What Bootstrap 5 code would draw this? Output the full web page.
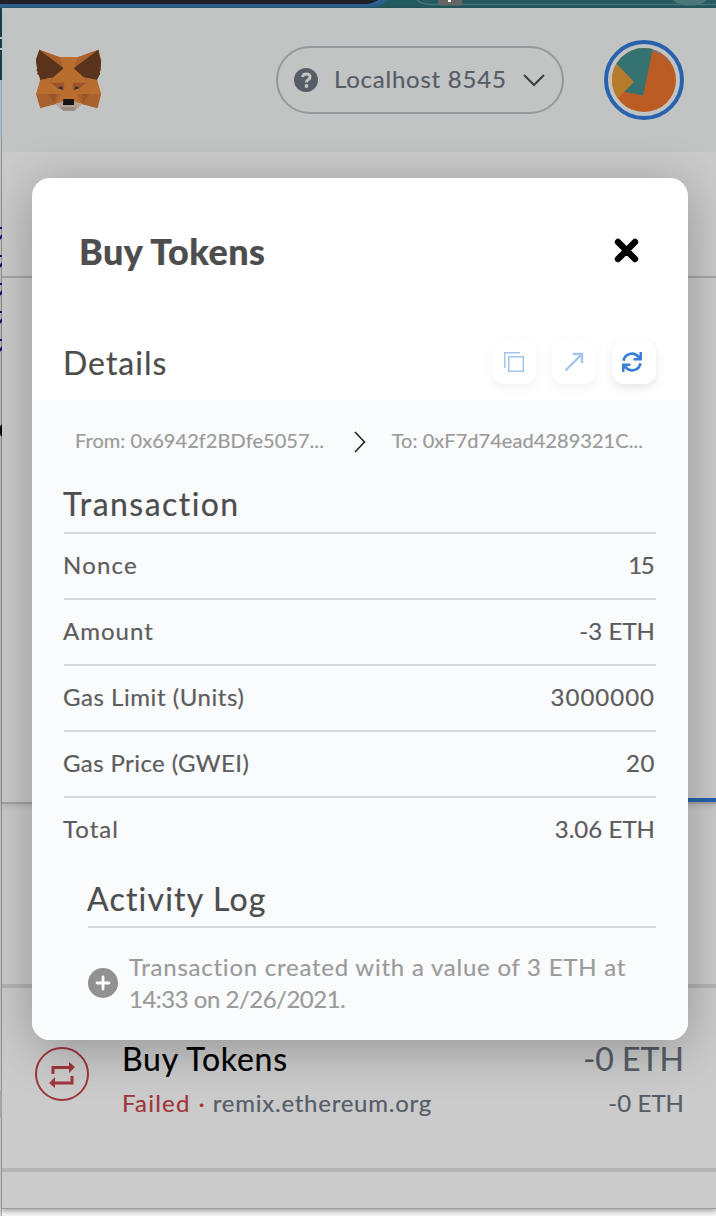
<!DOCTYPE html>
<html lang="en">
<head>
<meta charset="utf-8">
<meta name="viewport" content="width=device-width, initial-scale=1">
<title>Buy Tokens</title>
<link href="https://cdn.jsdelivr.net/npm/bootstrap@5.3.0/dist/css/bootstrap.min.css" rel="stylesheet">
<style>
body{font-family:Lato,"Liberation Sans",sans-serif;background:#f4f4f4;color:#4d4d4d;width:716px;height:1216px;overflow:hidden;-webkit-text-stroke:.2px currentColor}
svg{display:block;flex:none}
.t20{font-size:20px;line-height:28px}
.t24{font-size:24px;line-height:32px}
.t32{font-size:32px;line-height:40px}
.t36{font-size:36px;line-height:44px;font-weight:900}
.nw{white-space:nowrap}
.ls-tight{letter-spacing:-1.6px;padding-right:2px}
.ls-neg{letter-spacing:-.5px}
.ls-0{letter-spacing:.05px}
.ls-1{letter-spacing:.4px}
.ls-2{letter-spacing:.55px}
.ls-3{letter-spacing:.76px}
.ls-4{letter-spacing:1px}
.ls-5{letter-spacing:1.2px}
.ls-6{letter-spacing:1.45px}
.tabstrip{height:8px}
.wallet{height:1201px;background:#cbcbcb;border-bottom:1px solid #9c9c9c;box-shadow:0 2px 5px rgba(0,0,0,.35)}
.topbar{height:144px;background:#c2c3c3;padding:0 32px 0 34px}
.network{width:288px;height:68px;border:2px solid #95989c;border-radius:34px;color:#565d66;padding:0 17px 0 16px;margin-right:40px}
.network-name{margin-left:16px;padding-bottom:2px}
.avatar{width:80px;height:80px;border:4px solid #2962ae}
.crumbs{height:126px;border-bottom:2px solid #a9a9a9}
.overview{height:526px;border-bottom:2px solid #a3a3a3;box-shadow:0 2px 5px rgba(0,0,0,.12)}
.tabline{width:357px;height:4px;background:#2962ae}
.gap-block{height:180px}
.entry{height:188px;border:4px solid #b4b4b4;border-width:4px 0;padding:51px 32px 0 33px}
.entry-icon{margin-top:8px}
.entry-text{margin-left:33px}
.entry-sub{margin-top:8px}
.dot{margin:0 8px}
.slate{color:#565d66}
.fail{color:#a1353d}
.dialog{left:32px;top:178px;width:656px;height:862px;border-radius:18px;background:#fff;box-shadow:0 8px 50px rgba(0,0,0,.28)}
.dhead{height:146px;padding:0 46px 0 47px}
.dsub{height:76px;padding:0 32px 0 31px}
.dsub>span{padding-top:1px}
.tool{width:44px;height:44px;border-radius:12px;background:#fff;box-shadow:0 4px 10px rgba(0,0,0,.1)}
.dim{opacity:.45}
.dbody{height:640px;background:#fafbfd;padding:0 32px}
.party{height:82px;color:#9b9b9b;padding:0 13px 0 11px}
.party span{padding-bottom:2px}
.party svg{margin:1px 0 0 4px}
.rule{border-bottom:2px solid #d8d8d8}
.section-title{height:52px;padding-top:2px}
.item{height:66px;color:#5d5d5d;padding:0 1px 2px 0}
.item:not(.rule){padding-bottom:4px}
.item span:first-child,.section-title span,.log-title span{margin-left:-1px}
.log{margin-left:24px}
.log-title{height:64px;padding-top:15px}
.log-entry{padding-top:23px;color:#9b9b9b}
.log-entry svg{margin-top:-1px}
.log-text{margin-left:11px}
</style>
</head>
<body class="position-relative">
<svg class="tabstrip" width="716" height="8"><rect width="716" height="8" fill="#255a60"/><path d="M0 0H387Q380 7.500 367 7.500H0Z" fill="#2c608f"/><path d="M0 0H378Q372 4 366 4H0Z" fill="#202124"/><path d="M417 0Q422 4.500 432 4.500H716" fill="none" stroke="#437578" stroke-width="1.500"/><rect x="438" y="-4" width="24" height="9.500" rx="2" fill="#656565"/><rect x="448" width="3" height="2" fill="#fff"/><ellipse cx="690" cy="-6" rx="20" ry="11.500" fill="#4a7779"/></svg>
<div class="d-flex">
<svg width="2" height="1208"><rect width="2" height="1208" fill="#d9d9d9"/><rect width="2" height="72" fill="#174950"/><path d="M0 30h2M0 41h2" stroke="#d3dede" stroke-width="2"/><rect y="72" width="2" height="57" fill="#b4cbdf"/><path d="M1.500 129V1208" stroke="#aaa"/><path d="M0 220h2M0 231l2-4M0 248h2M0 259l2-4M0 276h2M0 287l2-4M0 304h2M0 315l2-4M0 332h2M0 343l2-4" stroke="#11118b" stroke-width="2"/><path d="M2 417Q-1 422 2 428" stroke="#111" stroke-width="2"/><rect y="1082" width="2" height="28" fill="#bcbcbc"/></svg>
<main class="wallet flex-grow-1">
<header class="topbar d-flex align-items-center">
<svg class="me-auto" width="66" height="62" viewBox="108 147 198 186"><path fill="#b96d2f" d="M118 149 180 172h53l62-23 9 31-5 32-8 28 12 42-10 42-46-12-15-4h-52l-14 4-45 12-13-42 13-43-10-26-2-34Z"/><path fill="#a9612d" d="M118 149 180 172 189 205 162 225 151 252 122 238M295 149 233 172 222 205 250 225 260 250 291 238M109 282h74l-16 30-46 12ZM303 282h-73l15 30 46 12Z"/><path fill="#b96d2f" d="M180 172h53l-12 33 5 95h-38l4-95Z"/><path fill="#59331c" d="m118 149 73 56-31 27-39 8-4-14-6-5 3-5-5-5 3-5-5-25ZM295 149l-74 56 29 26 41 9 7-14 3-5-2-5 3-5 1-25Z"/><path fill="#b96d2f" d="m122 240 30-7-2 49h-41ZM291 240l-31-5 0 47h43Z"/><path fill="#9c552a" d="M152 248h40l1 21-21-5ZM219 248h41l-22 16-20 6ZM144 282h26l-6 27ZM243 282h26l-20 28Z"/><path fill="#b0a196" d="m166 313 24-9h34l22 9-22 19h-34Z"/><path fill="#978a80" d="M179 322h52l-9 10h-32Z"/><path fill="#141619" d="M190 297h32v18h-33Z"/><path fill="#27313a" d="m172 264 13-5 4 11ZM239 264l-12-5-5 11Z"/></svg>
<div class="network d-flex align-items-center">
<svg width="24" height="24" viewBox="0 0 24 24"><circle cx="12" cy="12" r="12" fill="#565d66"/><path d="M8.500 9Q9 6 12.500 6T16 9Q16 11 13.800 12Q12.500 12.700 12.500 14.500" fill="none" stroke="#c2c3c3" stroke-width="3"/><circle cx="12.500" cy="18" r="1.900" fill="#c2c3c3"/></svg>
<span class="network-name t24 nw ls-3">Localhost 8545</span>
<svg class="ms-auto" width="22" height="14" viewBox="0 0 22 14"><path d="m1 2 10 10L21 2" fill="none" stroke="#3e3e3e" stroke-width="2"/></svg>
</div>
<div class="avatar rounded-circle d-flex align-items-center justify-content-center"><svg width="64" height="64" viewBox="0 0 64 64"><defs><clipPath id="disc"><circle cx="32" cy="32" r="32"/></clipPath></defs><g clip-path="url(#disc)"><path fill="#bb5c25" d="M0 0h64v64H0z"/><path fill="#34736f" d="M0 0h41L31 47.500 13 44 0 20Z"/><path fill="#b87b2c" d="m0 11 22 23L0 56Z"/><path fill="#3c84c1" d="m40 0 24 18-8-7L40 2Z"/></g></svg></div>
</header>
<div class="crumbs"></div>
<div class="overview d-flex align-items-end justify-content-end"><div class="tabline"></div></div>
<div class="gap-block"></div>
<div class="entry d-flex">
<svg class="entry-icon" width="54" height="54" viewBox="0 0 54 54"><g fill="none" stroke="#a1353d"><circle cx="27" cy="27" r="26" stroke-width="2"/><path d="M18 27v-6.500h16M37 29v7H20" stroke-width="3"/></g><path fill="#a1353d" d="m34 15 6 5-6 6ZM20 30l-6 6 6 5Z"/></svg>
<div class="entry-text flex-grow-1">
<div class="d-flex justify-content-between t32"><span class="text-black nw ls-3">Buy Tokens</span><span class="slate nw ls-0">-0 ETH</span></div>
<div class="entry-sub d-flex t24"><span class="fail nw ls-5">Failed</span><span class="dot fail">·</span><span class="slate nw ls-3">remix.ethereum.org</span><span class="slate nw ms-auto ls-0">-0 ETH</span></div>
</div>
</div>
</main>
</div>
<section class="dialog position-absolute overflow-hidden">
<div class="dhead d-flex align-items-center justify-content-between"><span class="t36 nw ls-1">Buy Tokens</span>
<svg width="31" height="30" viewBox="0 0 30 30"><path d="M6.500 6 23.500 23M23.500 6 6.500 23" stroke="#000" stroke-width="6.400" stroke-linecap="round"/></svg></div>
<div class="dsub d-flex align-items-center"><span class="t32 nw me-auto ls-4">Details</span>
<div class="d-flex gap-3">
<div class="tool dim d-flex align-items-center justify-content-center"><svg width="20" height="20" viewBox="0 0 20 20"><path d="M.75 16V.75H16M4.750 4.750h14.500v14.500H4.750Z" fill="none" stroke="#3682d2" stroke-width="1.500"/></svg></div>
<div class="tool dim d-flex align-items-center justify-content-center"><svg width="20" height="20" viewBox="0 0 20 20"><path d="M1.500 18.500 17 3M9 2h9v9" fill="none" stroke="#3682d2" stroke-width="2.400"/></svg></div>
<div class="tool d-flex align-items-center justify-content-center pe-1"><svg width="20" height="20" viewBox="0 0 20 20"><path d="M1.500 8.800A8.600 8.600 0 0 1 16.500 4.800M18.500 11.200A8.600 8.600 0 0 1 3.500 15.200" fill="none" stroke="#3a7fd5" stroke-width="2.700"/><path fill="#3a7fd5" d="M20 0v8.500h-8.500V6.200l4-.5L17.500 3V0ZM0 20v-8.500h8.500v2.300l-4 .5L2.500 17v3Z"/></svg></div>
</div></div>
<div class="dbody">
<div class="party d-flex align-items-center justify-content-between t20"><span class="nw ls-0">From: 0x6942f2BDfe5057...</span><svg width="14" height="22" viewBox="0 0 14 22"><path d="m2 1 9.500 10L2 21" fill="none" stroke="#222" stroke-width="1.600"/></svg><span class="nw ls-0">To: 0xF7d74ead4289321C...</span></div>
<div class="section-title rule t32"><span class="nw ls-6">Transaction</span></div>
<div class="item rule d-flex align-items-center justify-content-between t24"><span class="nw ls-5">Nonce</span><span class="nw ls-tight">15</span></div>
<div class="item rule d-flex align-items-center justify-content-between t24"><span class="nw ls-4">Amount</span><span class="nw ls-0">-3 ETH</span></div>
<div class="item rule d-flex align-items-center justify-content-between t24"><span class="nw ls-2">Gas Limit (Units)</span><span class="nw ls-4">3000000</span></div>
<div class="item rule d-flex align-items-center justify-content-between t24"><span class="nw ls-1">Gas Price (GWEI)</span><span class="nw ls-2">20</span></div>
<div class="item d-flex align-items-center justify-content-between t24"><span class="nw ls-4">Total</span><span class="nw ls-0">3.06 ETH</span></div>
<div class="log"><div class="log-title rule t32"><span class="nw ls-5">Activity Log</span></div>
<div class="log-entry d-flex align-items-center t24"><svg width="30" height="30" viewBox="0 0 30 30"><circle cx="15" cy="15" r="15" fill="#919191"/><path d="M15 9v12M9 15h12" stroke="#fff" stroke-width="2.800" stroke-linecap="round"/></svg><div class="log-text"><span class="nw ls-3">Transaction created with a value of 3 ETH at</span><br><span class="nw ls-neg">14:33 on 2/26/2021.</span></div></div></div>
</div>
</section>
<script src="https://cdn.jsdelivr.net/npm/bootstrap@5.3.0/dist/js/bootstrap.bundle.min.js"></script>
</body>
</html>
